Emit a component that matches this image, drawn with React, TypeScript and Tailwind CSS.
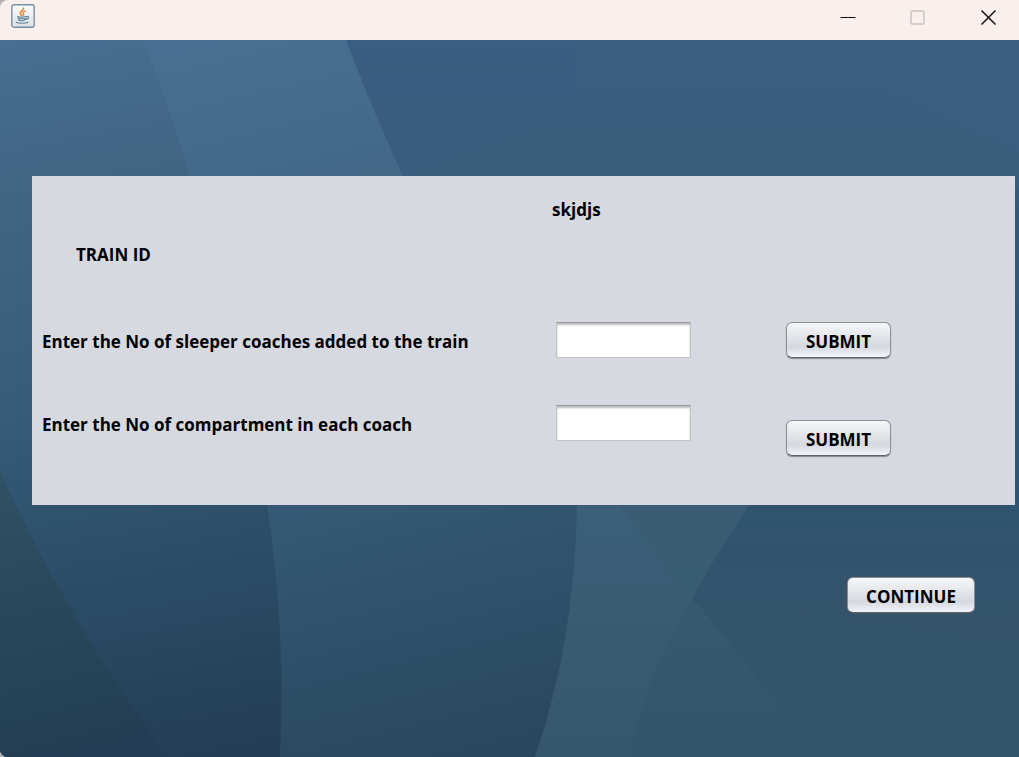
import React, { useState } from "react";

const buttonClass =
  "h-9 rounded-md border border-[#8c8e94] border-b-[#5f6268] bg-linear-to-b from-[#f6f7f9] via-[#d5d8de] via-70% to-[#f3f5fc] pt-0.5 text-[17px] leading-none font-bold text-black shadow-[0_1px_1px_rgba(80,84,92,0.6)]";

function Backdrop() {
  return (
    <svg
      className="absolute inset-0 h-full w-full"
      viewBox="0 0 1019 717"
      preserveAspectRatio="none"
      aria-hidden="true"
    >
      <defs>
        <linearGradient id="base" x1="0" y1="0" x2="0" y2="717" gradientUnits="userSpaceOnUse">
          <stop offset="0" stopColor="#3a5f80" />
          <stop offset="0.2" stopColor="#395d7a" />
          <stop offset="0.22" stopColor="#345a76" />
          <stop offset="0.65" stopColor="#30546f" />
          <stop offset="0.75" stopColor="#34536c" />
          <stop offset="1" stopColor="#34546b" />
        </linearGradient>
        <linearGradient id="band" x1="250" y1="-40" x2="440" y2="730" gradientUnits="userSpaceOnUse">
          <stop offset="0" stopColor="#487193" />
          <stop offset="0.28" stopColor="#426785" />
          <stop offset="0.6" stopColor="#375b77" />
          <stop offset="0.78" stopColor="#30526b" />
          <stop offset="1" stopColor="#2a475f" />
        </linearGradient>
        <linearGradient id="left" x1="60" y1="-10" x2="200" y2="715" gradientUnits="userSpaceOnUse">
          <stop offset="0" stopColor="#476f91" />
          <stop offset="0.2" stopColor="#416583" />
          <stop offset="0.5" stopColor="#375c78" />
          <stop offset="0.65" stopColor="#2f526d" />
          <stop offset="0.82" stopColor="#2a4861" />
          <stop offset="1" stopColor="#233e55" />
        </linearGradient>
        <linearGradient id="corner" x1="0" y1="432" x2="70" y2="717" gradientUnits="userSpaceOnUse">
          <stop offset="0" stopColor="#315165" />
          <stop offset="0.5" stopColor="#29475b" />
          <stop offset="1" stopColor="#233e54" />
        </linearGradient>
        <linearGradient id="ray" x1="0" y1="465" x2="0" y2="717" gradientUnits="userSpaceOnUse">
          <stop offset="0" stopColor="#3c6079" />
          <stop offset="1" stopColor="#36566b" />
        </linearGradient>
        <linearGradient id="facet" x1="0" y1="465" x2="0" y2="560" gradientUnits="userSpaceOnUse">
          <stop offset="0" stopColor="#3a5d75" />
          <stop offset="1" stopColor="#385c70" />
        </linearGradient>
        <linearGradient id="fade" x1="0" y1="560" x2="0" y2="690" gradientUnits="userSpaceOnUse">
          <stop offset="0" stopColor="#3b5d72" stopOpacity="0.5" />
          <stop offset="1" stopColor="#36566b" stopOpacity="0.4" />
        </linearGradient>
        <clipPath id="ray-shape">
          <path d="M560 400H795Q655 590 628 717H500Z" />
        </clipPath>
      </defs>
      <rect width="1019" height="717" fill="url(#base)" />
      <path d="M346 0H574L579 70L509 95L403 136Z" fill="#395e83" opacity="0.3" />
      <path d="M795 0H1019V115Z" fill="#3b6083" opacity="0.35" />
      <path d="M689 562L1019 602V717H600Z" fill="#37566c" opacity="0.35" />
      <path d="M670 530L797 686Q700 706 628 717H560Z" fill="url(#fade)" />
      <path d="M560 400H795Q655 590 628 717H500Z" fill="url(#ray)" />
      <path d="M568 400H800V700Z" fill="url(#facet)" clipPath="url(#ray-shape)" />
      <path d="M0 0H346Q370 65 403 136C490 270 592 360 577 465Q575 600 535 717H0Z" fill="url(#band)" />
      <path d="M0 0H142Q168 62 190 136Q243 294 267 465Q286 585 280 717H0Z" fill="url(#left)" />
      <path d="M0 432Q72 588 168 717H0Z" fill="url(#corner)" />
    </svg>
  );
}

function JavaIcon() {
  return (
    <svg className="h-6 w-6" viewBox="0 0 24 24" fill="none" aria-hidden="true">
      <defs>
        <linearGradient id="tile" x1="0" y1="0" x2="0" y2="1">
          <stop offset="0" stopColor="#fafbfb" />
          <stop offset="1" stopColor="#dce0e4" />
        </linearGradient>
      </defs>
      <rect x="0.8" y="0.8" width="22.4" height="22.4" rx="2" fill="url(#tile)" stroke="#7890a2" strokeWidth="1.4" />
      <path d="M12.6 4.2C13.6 6.2 8.6 7.2 9.2 9.3C9.5 10.3 10.3 10.7 10.7 11.4" stroke="#e88732" strokeWidth="1.6" strokeLinecap="round" />
      <path d="M14.4 7.2C11.6 8 11.6 8.8 12.4 9.7C13 10.4 12.6 11 12 11.5" stroke="#e88732" strokeWidth="1.3" strokeLinecap="round" />
      <path d="M6.6 12.5C9 13.2 13 13.1 15.2 12.5M15.4 12.6C18.8 12 18.2 15 15 15.4M7.2 13.6C7.4 16.8 8.4 16.6 11 16.7C13.4 16.7 14.2 16.2 14.8 14.4M8 14.8H14M5.2 18.2C7 19.5 15 19.5 17 18.2" stroke="#5e7e99" strokeWidth="1.1" strokeLinecap="round" />
    </svg>
  );
}

function TitleBar() {
  return (
    <header className="flex h-10 shrink-0 justify-between rounded-tl-lg bg-[#f9f0ed] pl-[11px]">
      <div className="pt-1">
        <JavaIcon />
      </div>
      <div className="flex h-[35px]">
        <button type="button" aria-label="Minimize" className="flex w-[70px] items-center justify-center">
          <svg width="16" height="16" viewBox="0 0 16 16" aria-hidden="true">
            <path d="M0.5 7.5H15.5" stroke="#111" />
          </svg>
        </button>
        <button type="button" aria-label="Maximize" disabled className="flex w-[70px] items-center justify-center">
          <svg width="16" height="16" viewBox="0 0 16 16" fill="none" aria-hidden="true">
            <rect x="1" y="1" width="13" height="13" rx="1" stroke="#c7c1bf" strokeWidth="1.4" />
          </svg>
        </button>
        <button type="button" aria-label="Close" className="flex w-[66px] items-center justify-center pl-1">
          <svg width="16" height="16" viewBox="0 0 16 16" aria-hidden="true">
            <path d="M1.5 0.5L15.5 14.5M15.5 0.5L1.5 14.5" stroke="#151313" strokeWidth="1.5" />
          </svg>
        </button>
      </div>
    </header>
  );
}

function CountRow({ id, label, lowered }: { id: string; label: string; lowered?: boolean }) {
  const [value, setValue] = useState("");
  return (
    <div className="grid grid-cols-[524fr_230fr_229fr] items-start">
      <label htmlFor={id} className="pt-0.5 pl-[10px] leading-9 whitespace-nowrap">
        {label}
      </label>
      <input
        id={id}
        type="text"
        value={value}
        onChange={(e) => setValue(e.target.value)}
        className="h-9 w-[135px] border border-[#c3c4c6] border-t-[#98999c] bg-white px-2 shadow-[inset_0_2px_2px_rgba(90,90,95,0.4)] outline-none"
      />
      <div className={lowered ? "pt-[15px]" : ""}>
        <button type="button" className={`${buttonClass} w-[105px]`}>
          SUBMIT
        </button>
      </div>
    </div>
  );
}

export default function App() {
  return (
    <div className="flex min-h-screen flex-col bg-[#b5b1af] font-['Open_Sans',sans-serif] text-[17px] font-bold text-black">
      <TitleBar />
      <main className="relative flex-1 overflow-hidden rounded-bl-lg">
        <Backdrop />
        <div className="relative pt-[136px] pr-1 pb-8 pl-8">
          <form className="bg-[#d6d9e0] pt-5 pb-[49px]" onSubmit={(e) => e.preventDefault()}>
            <div className="grid grid-cols-[524fr_459fr]">
              <output className="col-start-2 -ml-1 leading-7">skjdjs</output>
            </div>
            <div className="mt-[17px] pl-11 leading-7">TRAIN ID</div>
            <div className="mt-[53px] flex flex-col gap-8">
              <CountRow id="sleeper-coaches" label="Enter the No of sleeper coaches added to the train" />
              <div className="pt-[13px]">
                <CountRow id="compartments" label="Enter the No of compartment in each coach" lowered />
              </div>
            </div>
          </form>
          <div className="mt-[72px] flex justify-end pr-10">
            <button type="button" className={`${buttonClass} w-32`}>
              CONTINUE
            </button>
          </div>
        </div>
      </main>
    </div>
  );
}
